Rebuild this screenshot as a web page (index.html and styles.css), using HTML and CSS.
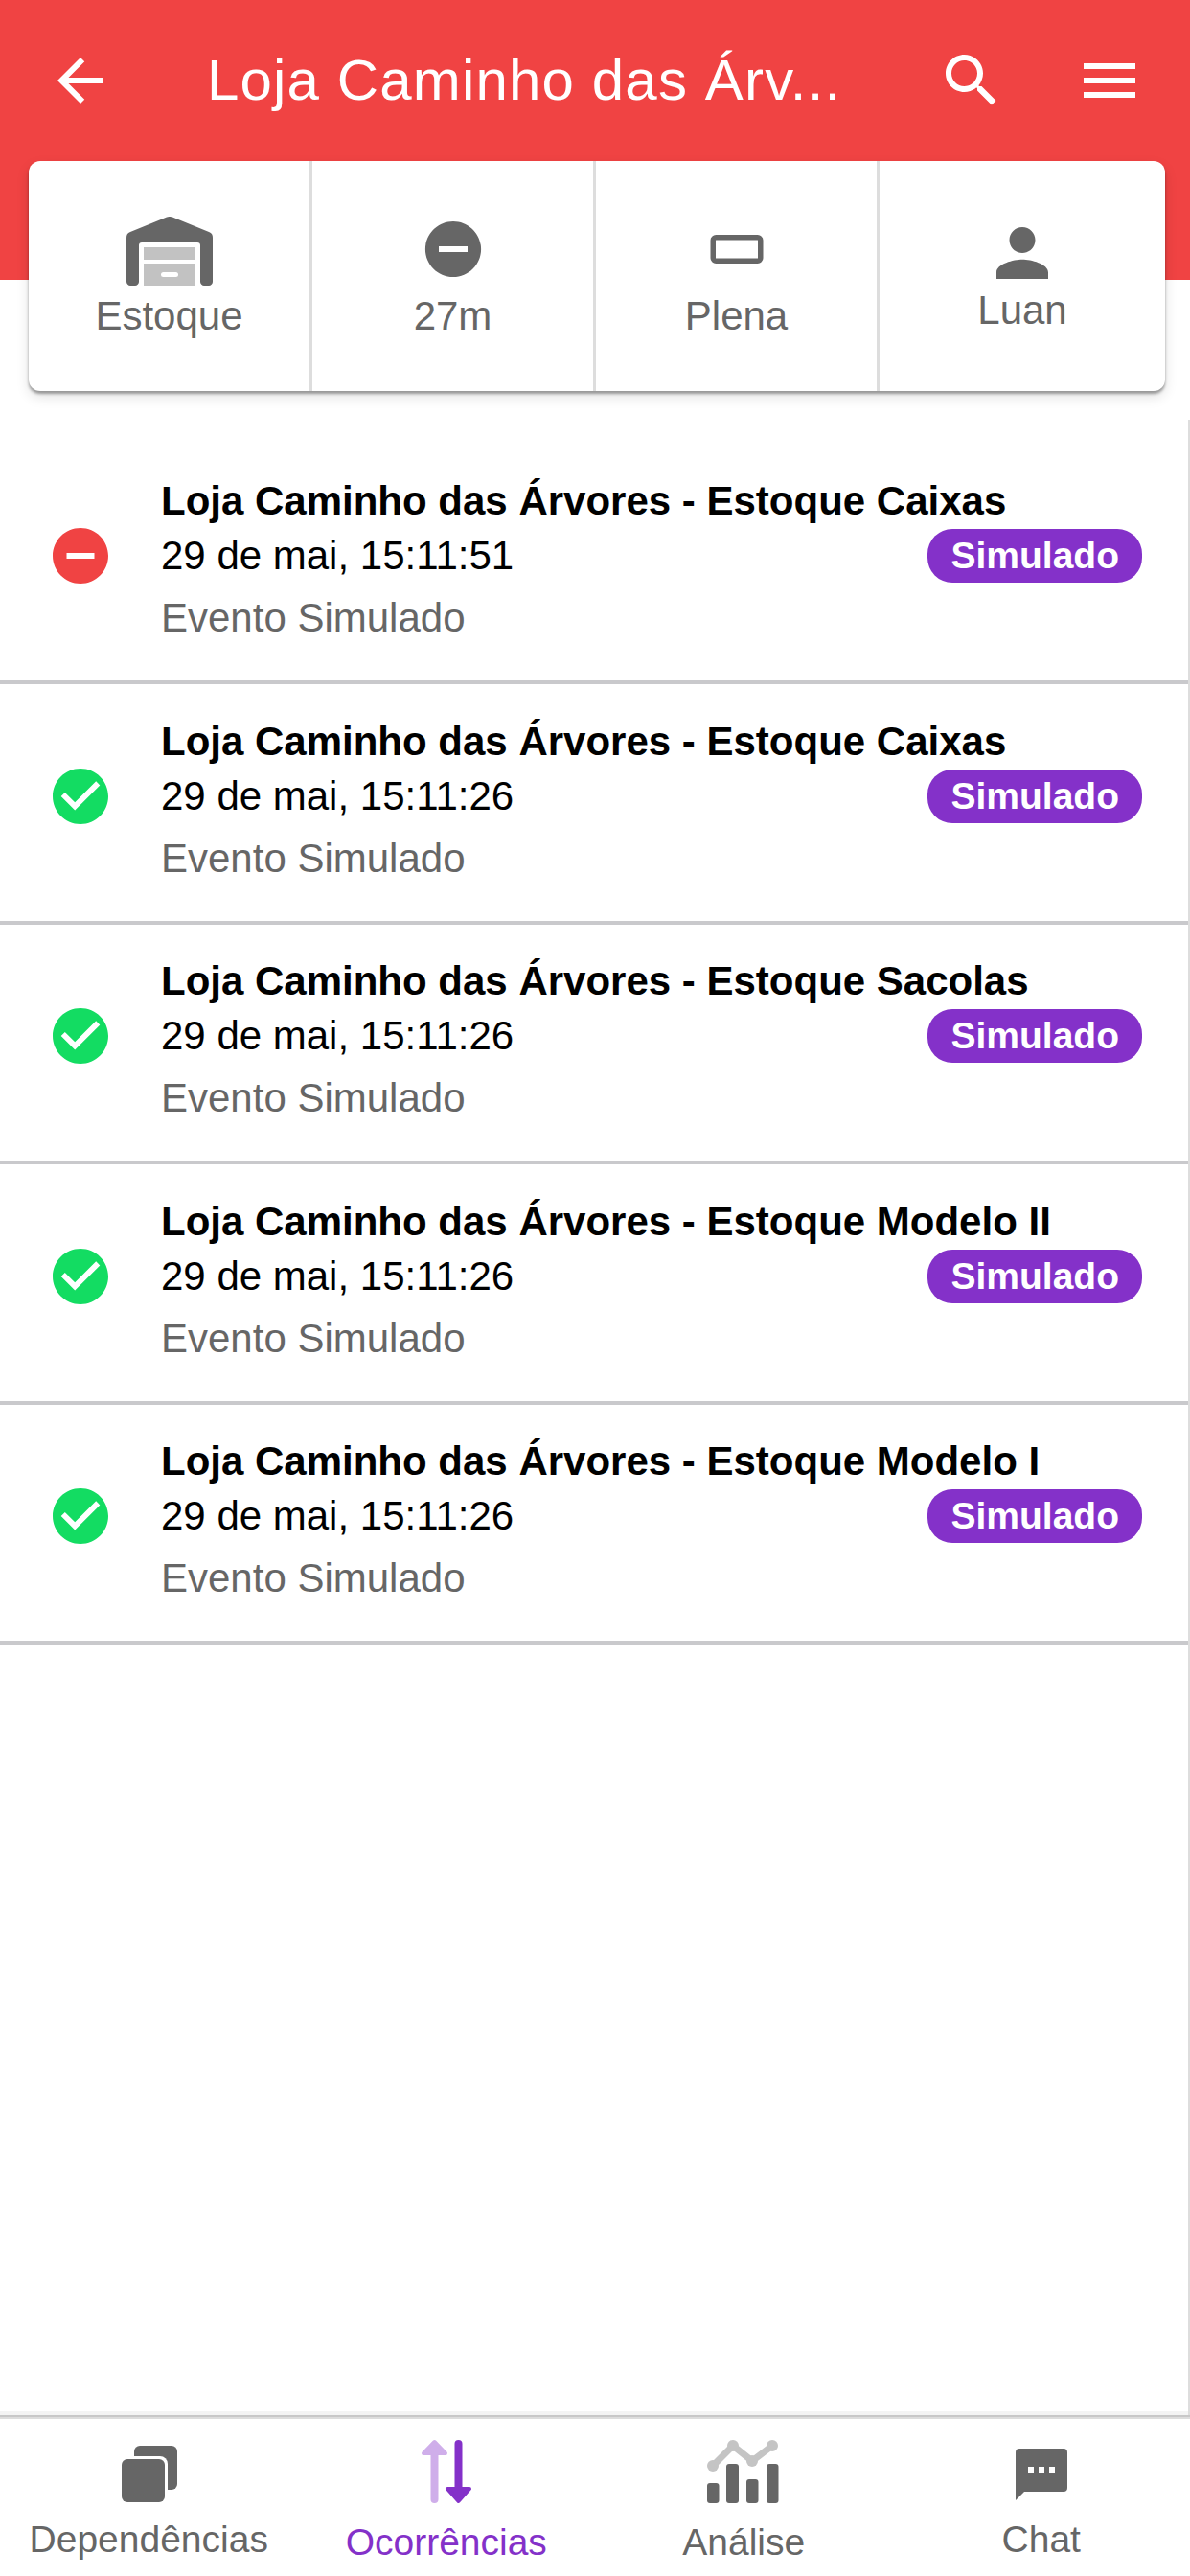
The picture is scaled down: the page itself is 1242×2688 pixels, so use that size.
FILE: index.html
```html
<!DOCTYPE html>
<html lang="pt">
<head>
  <meta charset="UTF-8">
  <title>Loja Caminho das Árvores</title>
  <link rel="stylesheet" href="styles.css">
</head>
<body>
  <div class="page">

    <header class="topbar">
      <svg class="bar-icon" viewBox="0 0 24 24"><path d="M20 11H7.830l5.590-5.590L12 4l-8 8 8 8 1.410-1.410L7.830 13H20v-2z"/></svg>
      <h1 class="topbar-title">Loja Caminho das Árv...</h1>
      <svg class="bar-icon" viewBox="0 0 24 24"><path d="M15.500 14h-.790l-.280-.270C15.410 12.590 16 11.110 16 9.500 16 5.910 13.090 3 9.500 3S3 5.910 3 9.500 5.910 16 9.500 16c1.610 0 3.090-.590 4.230-1.570l.270.280v.790l5 4.990L20.490 19l-4.990-5zm-6 0C7.010 14 5 11.990 5 9.500S7.010 5 9.500 5 14 7.010 14 9.500 11.990 14 9.500 14z"/></svg>
      <svg class="bar-icon menu-icon" viewBox="0 0 24 24"><path d="M3 18h18v-2H3v2zm0-5h18v-2H3v2zm0-7v2h18V6H3z"/></svg>
    </header>

    <section class="summary">
      <div class="summary-cell">
        <svg class="summary-icon icon-store" viewBox="0 0 90 72">
          <path d="M0 22c0-3 1-5 4-6L42 .5c2-.7 4-.7 6 0L86 16c3 1 4 3 4 6v46c0 2-2 4-4 4H81c-2 0-4-2-4-4V30c0-2-1-3-3-3H16c-2 0-3 1-3 3v38c0 2-2 4-4 4H4c-2 0-4-2-4-4z" fill="#666"/>
          <rect x="18" y="32" width="54" height="13" fill="#c2c2c2"/>
          <rect x="18" y="49" width="54" height="23" fill="#c2c2c2"/>
          <rect x="36" y="58" width="18" height="5" rx="2.500" fill="#fff"/>
        </svg>
        <span class="summary-label">Estoque</span>
      </div>
      <div class="summary-cell">
        <svg class="summary-icon" viewBox="0 0 24 24"><path fill="#666" d="M12 2.300c-5.350 0-9.700 4.350-9.700 9.700s4.350 9.700 9.700 9.700 9.700-4.350 9.700-9.700S17.350 2.300 12 2.300zm5 10.700H7v-2h10v2z"/></svg>
        <span class="summary-label">27m</span>
      </div>
      <div class="summary-cell">
        <svg class="summary-icon" viewBox="0 0 72 72"><rect x="11.250" y="23.750" width="49.500" height="24.500" rx="3" fill="none" stroke="#666" stroke-width="5.500"/></svg>
        <span class="summary-label">Plena</span>
      </div>
      <div class="summary-cell summary-cell-user">
        <svg class="icon-user" viewBox="4 4 16 16"><path fill="#666" d="M12 12c2.210 0 4-1.790 4-4s-1.790-4-4-4-4 1.790-4 4 1.790 4 4 4zm0 2c-2.670 0-8 1.340-8 4v2h16v-2c0-2.660-5.330-4-8-4z"/></svg>
        <span class="summary-label">Luan</span>
      </div>
    </section>

    <main class="event-list">
      <article class="event">
        <svg class="event-icon event-icon-red" viewBox="2 2 20 20"><path d="M12 2C6.480 2 2 6.480 2 12s4.480 10 10 10 10-4.480 10-10S17.520 2 12 2zm5 11H7v-2h10v2z"/></svg>
        <div class="event-text">
          <p class="event-title">Loja Caminho das Árvores - Estoque Caixas</p>
          <div class="event-middle">
            <span class="event-time">29 de mai, 15:11:51</span>
            <span class="badge">Simulado</span>
          </div>
          <p class="event-desc">Evento Simulado</p>
        </div>
      </article>
      <article class="event">
        <svg class="event-icon event-icon-green" viewBox="2 2 20 20"><path d="M12 2C6.480 2 2 6.480 2 12s4.480 10 10 10 10-4.480 10-10S17.520 2 12 2zm-2 15l-5-5 1.410-1.410L10 14.170l7.590-7.590L19 8l-9 9z"/></svg>
        <div class="event-text">
          <p class="event-title">Loja Caminho das Árvores - Estoque Caixas</p>
          <div class="event-middle">
            <span class="event-time">29 de mai, 15:11:26</span>
            <span class="badge">Simulado</span>
          </div>
          <p class="event-desc">Evento Simulado</p>
        </div>
      </article>
      <article class="event">
        <svg class="event-icon event-icon-green" viewBox="2 2 20 20"><path d="M12 2C6.480 2 2 6.480 2 12s4.480 10 10 10 10-4.480 10-10S17.520 2 12 2zm-2 15l-5-5 1.410-1.410L10 14.170l7.590-7.590L19 8l-9 9z"/></svg>
        <div class="event-text">
          <p class="event-title">Loja Caminho das Árvores - Estoque Sacolas</p>
          <div class="event-middle">
            <span class="event-time">29 de mai, 15:11:26</span>
            <span class="badge">Simulado</span>
          </div>
          <p class="event-desc">Evento Simulado</p>
        </div>
      </article>
      <article class="event">
        <svg class="event-icon event-icon-green" viewBox="2 2 20 20"><path d="M12 2C6.480 2 2 6.480 2 12s4.480 10 10 10 10-4.480 10-10S17.520 2 12 2zm-2 15l-5-5 1.410-1.410L10 14.170l7.590-7.590L19 8l-9 9z"/></svg>
        <div class="event-text">
          <p class="event-title">Loja Caminho das Árvores - Estoque Modelo II</p>
          <div class="event-middle">
            <span class="event-time">29 de mai, 15:11:26</span>
            <span class="badge">Simulado</span>
          </div>
          <p class="event-desc">Evento Simulado</p>
        </div>
      </article>
      <article class="event">
        <svg class="event-icon event-icon-green" viewBox="2 2 20 20"><path d="M12 2C6.480 2 2 6.480 2 12s4.480 10 10 10 10-4.480 10-10S17.520 2 12 2zm-2 15l-5-5 1.410-1.410L10 14.170l7.590-7.590L19 8l-9 9z"/></svg>
        <div class="event-text">
          <p class="event-title">Loja Caminho das Árvores - Estoque Modelo I</p>
          <div class="event-middle">
            <span class="event-time">29 de mai, 15:11:26</span>
            <span class="badge">Simulado</span>
          </div>
          <p class="event-desc">Evento Simulado</p>
        </div>
      </article>
    </main>

    <nav class="tabbar">
      <div class="tab">
        <svg class="tab-icon" viewBox="0 0 72 72">
          <rect x="21" y="8" width="45" height="46" rx="6" fill="#666"/>
          <rect x="5" y="19" width="51" height="51" rx="8" fill="#fff"/>
          <rect x="8" y="22" width="45" height="45" rx="6" fill="#666"/>
        </svg>
        <span class="tab-label">Dependências</span>
      </div>
      <div class="tab tab-low">
        <svg class="tab-icon" viewBox="0 0 72 72">
          <path d="M23.500 8V64" fill="none" stroke="#cfaeea" stroke-width="8" stroke-linecap="round"/>
          <path d="M23.500 4L12 16H35z" fill="#cfaeea" stroke="#cfaeea" stroke-width="4" stroke-linejoin="round"/>
          <path d="M48.500 6V62" fill="none" stroke="#8431c9" stroke-width="8" stroke-linecap="round"/>
          <path d="M48.500 66L37 53H60z" fill="#8431c9" stroke="#8431c9" stroke-width="4" stroke-linejoin="round"/>
        </svg>
        <span class="tab-label tab-label-active">Ocorrências</span>
      </div>
      <div class="tab tab-low">
        <svg class="tab-icon" viewBox="0 0 72 72">
          <path d="M4 29L25 8 45 24 66 8" fill="none" stroke="#c4c4c4" stroke-width="7"/>
          <circle cx="4" cy="29" r="6" fill="#c4c4c4"/>
          <circle cx="25" cy="8" r="6" fill="#c4c4c4"/>
          <circle cx="45" cy="24" r="6" fill="#c4c4c4"/>
          <circle cx="66" cy="8" r="6" fill="#c4c4c4"/>
          <rect x="-2" y="47" width="12.500" height="21" rx="3" fill="#666"/>
          <rect x="18" y="27" width="13" height="41" rx="3" fill="#666"/>
          <rect x="39" y="43" width="12.500" height="25" rx="3" fill="#666"/>
          <rect x="60" y="27" width="12.500" height="41" rx="3" fill="#666"/>
        </svg>
        <span class="tab-label">Análise</span>
      </div>
      <div class="tab">
        <svg class="tab-icon" viewBox="0 0 72 72">
          <path d="M9 15a4 4 0 0 1 4-4h46a4 4 0 0 1 4 4v37a4 4 0 0 1-4 4H18l-9 9z" fill="#666"/>
          <rect x="22" y="30" width="6" height="6" fill="#fff"/>
          <rect x="33" y="30" width="6" height="6" fill="#fff"/>
          <rect x="44" y="30" width="6" height="6" fill="#fff"/>
        </svg>
        <span class="tab-label">Chat</span>
      </div>
    </nav>

  </div>
</body>
</html>
```

FILE: styles.css
```css
* {
  box-sizing: border-box;
}

body {
  margin: 0;
  background-color: #ffffff;
  font-family: "Liberation Sans", Arial, sans-serif;
}

p,
h1 {
  margin: 0;
}

.page {
  display: flex;
  flex-direction: column;
  width: 1242px;
  height: 2688px;
  overflow: hidden;
}

.topbar {
  display: flex;
  align-items: flex-start;
  height: 292px;
  flex-shrink: 0;
  padding: 48px 48px 0;
  background-color: #f04343;
}

.bar-icon {
  width: 72px;
  height: 72px;
  fill: #ffffff;
  flex-shrink: 0;
}

.topbar-title {
  flex: 1;
  margin-left: 96px;
  color: #ffffff;
  font-size: 60px;
  font-weight: normal;
  line-height: 72px;
  letter-spacing: 1.150px;
  white-space: nowrap;
}

.menu-icon {
  margin-left: 72px;
}

/* card sits half over the red bar */
.summary {
  position: relative;
  display: grid;
  grid-template-columns: 296px 296px 296px 1fr;
  flex-shrink: 0;
  width: 1186px;
  height: 240px;
  margin: -124px 0 0 30px;
  background-color: #ffffff;
  border-radius: 12px;
  box-shadow: 0 3px 3px rgba(0, 0, 0, 0.35), 0 6px 14px rgba(0, 0, 0, 0.12);
}

.summary-cell {
  display: flex;
  flex-direction: column;
  align-items: center;
  padding-top: 56px;
  border-right: 3px solid #dddddd;
}

.summary-cell:last-child {
  border-right: none;
}

.summary-icon {
  width: 72px;
  height: 72px;
}

.icon-store {
  width: 90px;
  margin-top: 2px;
  margin-bottom: -2px;
}

.summary-label {
  margin-top: 10px;
  color: #666666;
  font-size: 42px;
  line-height: 48px;
}

.icon-user {
  width: 54px;
  height: 54px;
  margin-top: 13px;
}

.summary-cell-user .summary-label {
  margin-top: 9px;
}

.event-list {
  flex: 1;
  margin-top: 30px;
  padding-top: 25.500px;
  border-right: 2px solid #dddddd;
  box-shadow: inset 0 -4px 0 #f4f4f4;
}

.event {
  display: flex;
  align-items: center;
  height: 250.500px;
  padding: 0 48px 13px 55px;
  border-bottom: 4px solid #c9c9cc;
}

.event-icon {
  width: 58px;
  height: 58px;
  flex-shrink: 0;
}

.event-icon-red {
  fill: #f04343;
}

.event-icon-green {
  fill: #13dc62;
}

.event-text {
  flex: 1;
  margin-left: 55px;
  padding-top: 7px;
}

.event-title {
  color: #000000;
  font-size: 42px;
  font-weight: bold;
  line-height: 59px;
  white-space: nowrap;
}

.event-middle {
  display: flex;
  align-items: center;
  justify-content: space-between;
  height: 56px;
}

.event-time {
  color: #000000;
  font-size: 42px;
}

.badge {
  padding: 0 24px;
  color: #ffffff;
  background-color: #8431c9;
  font-size: 39px;
  font-weight: bold;
  line-height: 56px;
  border-radius: 26px;
}

.event-desc {
  margin-top: 8px;
  color: #666666;
  font-size: 42px;
  line-height: 58px;
}

.tabbar {
  display: flex;
  flex-shrink: 0;
  height: 168px;
  border-top: 2px solid #c8c8c8;
  box-shadow: inset 0 2px 0 #dddddd;
}

.tab {
  display: flex;
  flex: 1;
  flex-direction: column;
  align-items: center;
  padding-top: 22px;
}

.tab-icon {
  width: 72px;
  height: 72px;
  overflow: visible;
}

.tab-label {
  margin-top: 11px;
  color: #666666;
  font-size: 39px;
  line-height: 46px;
}

.tab-low .tab-label,
.tab-label-active {
  margin-top: 14px;
}

.tab-label-active {
  color: #8431c9;
}
```
